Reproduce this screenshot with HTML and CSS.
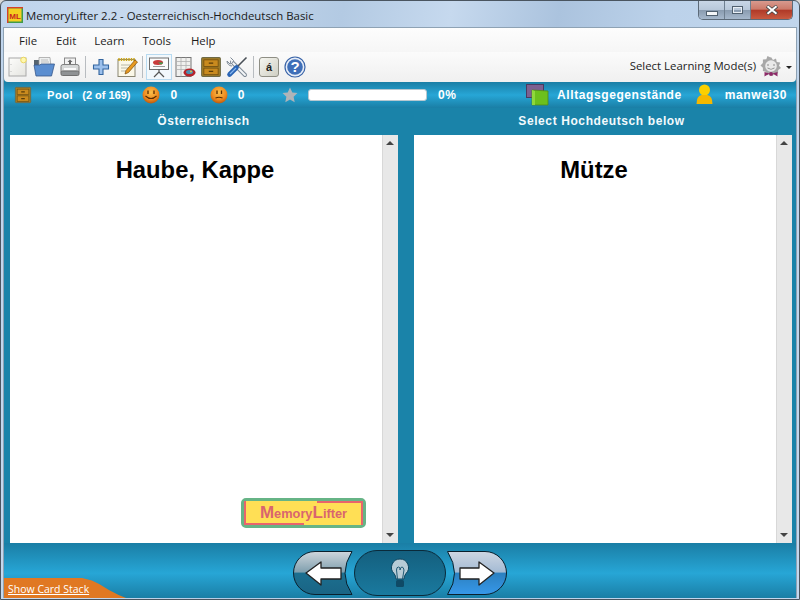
FILE: index.html
```html
<!DOCTYPE html>
<html lang="en">
<head>
    <meta charset="UTF-8">
    <title>MemoryLifter 2.2 - Oesterreichisch-Hochdeutsch Basic</title>
    <link rel="stylesheet" href="styles.css">
</head>
<body>
    <svg class="defs" width="0" height="0">
        <radialGradient id="orange" cx=".5" cy=".35" r=".7"><stop offset="0" stop-color="#fbc04a"/><stop offset=".6" stop-color="#ee8a20"/><stop offset="1" stop-color="#b04e08"/></radialGradient>
        <linearGradient id="backBtn" x1="0" y1="0" x2="0" y2="1"><stop offset="0" stop-color="#cfd6dc"/><stop offset=".48" stop-color="#7f9fae"/><stop offset=".5" stop-color="#1c6f90"/><stop offset="1" stop-color="#1a6484"/></linearGradient>
        <linearGradient id="nextBtn" x1="0" y1="0" x2="0" y2="1"><stop offset="0" stop-color="#ced6e2"/><stop offset=".48" stop-color="#a4bbd4"/><stop offset=".5" stop-color="#2b80bf"/><stop offset="1" stop-color="#3798ea"/></linearGradient>
        <linearGradient id="midBtn" x1="0" y1="0" x2="0" y2="1"><stop offset="0" stop-color="#145f7e"/><stop offset="1" stop-color="#1a7a9f"/></linearGradient>
        <linearGradient id="page" x1="0" y1="0" x2="1" y2="1"><stop offset="0" stop-color="#fdfdfb"/><stop offset="1" stop-color="#e4e4e0"/></linearGradient>
        <symbol id="drawer" viewBox="0 0 20 20">
            <rect x="1.500" y="1.500" width="17" height="17" rx="1" fill="#a87f22" stroke="#6f6a45"/>
            <rect x="3.500" y="3.500" width="13" height="6" fill="#c98a1e" stroke="#6a4a10" stroke-width=".7"/>
            <rect x="3.500" y="11" width="13" height="6" fill="#c98a1e" stroke="#6a4a10" stroke-width=".7"/>
            <path d="M8 6.500h4M8 14h4" stroke="#5a3c08" stroke-width="1.200"/>
        </symbol>
    </svg>

    <div class="window">
        <header class="titlebar">
            <svg class="app-icon" width="16" height="16" viewBox="0 0 16 16">
                <rect width="16" height="16" fill="#3f9a4a"/><path d="M0 0h16v1.500H1.500V16H0z" fill="#d8402a"/><rect x="1.500" y="1.500" width="13" height="13" fill="#f5d020"/>
                <text x="8" y="11.500" text-anchor="middle" class="app-icon-text">ML</text>
            </svg>
            <span class="title-text">MemoryLifter 2.2 - Oesterreichisch-Hochdeutsch Basic</span>
            <div class="win-buttons">
                <div class="win-btn win-min"><span></span></div>
                <div class="win-btn win-max"><span></span></div>
                <div class="win-btn win-close">
                    <svg width="16" height="10" viewBox="0 0 16 10"><path d="M3 1l10 8M13 1L3 9" stroke="#4a4a4a" stroke-width="3.600"/><path d="M3.500 1.300l9 7.400M12.500 1.300l-9 7.400" stroke="#fff" stroke-width="2"/></svg>
                </div>
            </div>
        </header>

        <div class="client">
            <nav class="menubar">
                <span class="menu-item">File</span>
                <span class="menu-item">Edit</span>
                <span class="menu-item">Learn</span>
                <span class="menu-item">Tools</span>
                <span class="menu-item">Help</span>
            </nav>

            <div class="toolbar">
                <svg class="tool" viewBox="0 0 22 22"><rect x="2" y="2" width="17" height="18" fill="url(#page)" stroke="#a8a8a8"/><circle cx="16.500" cy="4" r="2.800" fill="#fff8b0" stroke="#ecd860"/><path d="M4 8v.6M4 15v.6" stroke="#999"/></svg>
                <svg class="tool" viewBox="0 0 22 22"><path d="M1 4h6l1 2h8v4H1z" fill="#55636f"/><path d="M6 1.500h11l1 9H6z" fill="#eef0f0" stroke="#999" stroke-width=".7"/><path d="M8 4h7M8 6h8" stroke="#aaa" stroke-width=".7"/><path d="M1 9h6l1-1h13.500l-3 12H3z" fill="#5b8ed0" stroke="#38598c" stroke-width=".8"/></svg>
                <svg class="tool" viewBox="0 0 22 22"><rect x="5.500" y="2" width="11" height="9" fill="#f2f2f2" stroke="#888"/><path d="M11 3.500l-2.500 2.500h1.500v2.500h2V6h1.500z" fill="#666"/><path d="M2 10.500q0-2 2-2h14q2 0 2 2v6H2z" fill="#d6d8d8" stroke="#7f7f7f"/><rect x="2" y="15" width="18" height="4.500" rx="1.500" fill="#8f9294" stroke="#6f6f6f"/><rect x="5" y="12" width="12" height="2" fill="#fafafa"/></svg>
                <span class="tool-sep"></span>
                <svg class="tool" viewBox="0 0 22 22"><path d="M9 3.500h4v5.500h5.500v4H13v5.500H9V13H3.500V9H9z" fill="#9cc0ec" stroke="#33659f" stroke-width="1.100"/></svg>
                <svg class="tool" viewBox="0 0 22 22"><rect x="2" y="3.500" width="17" height="17" fill="#fbf8e8" stroke="#8a8672"/><path d="M3 2v3M5.500 2v3M8 2v3M10.500 2v3M13 2v3M15.500 2v3M18 2v3" stroke="#c9a418" stroke-width="1.400"/><path d="M5 9h9M5 12h7M5 15h5" stroke="#b8b8a8"/><path d="M9 18l1-3.500L19 4l2.500 2-9 10.500z" fill="#e89a20" stroke="#7a4a08" stroke-width=".7"/></svg>
                <span class="tool-sep"></span>
                <span class="tool-active">
                    <svg class="tool" viewBox="0 0 22 22"><rect x="1.500" y="2" width="19" height="11.500" fill="#fbfbfb" stroke="#6e6e6e"/><ellipse cx="10" cy="6.500" rx="5" ry="2.500" fill="#c83a3a"/><path d="M10 6.500h5a5 2.500 0 0 1-2 2z" fill="#3f9f4f"/><path d="M5 10.500h12" stroke="#9a9a9a"/><path d="M11 13.500v3M11 16l-5 5M11 16l5 5" stroke="#555" stroke-width="1.200" fill="none"/></svg>
                </span>
                <svg class="tool" viewBox="0 0 22 22"><rect x="2" y="1.500" width="15" height="19" fill="#f0f0ee" stroke="#777"/><path d="M2 5.500h15M2 9.500h15M2 13.500h15M7 1.500v19M12 1.500v19" stroke="#b0b0b0" stroke-width=".8"/><ellipse cx="15.500" cy="16.500" rx="6" ry="4" fill="#b5232a"/><ellipse cx="15.500" cy="16" rx="3.500" ry="2" fill="#4a8fb0"/><circle cx="17" cy="15.500" r="1" fill="#e2c040"/></svg>
                <svg class="tool" viewBox="0 0 20 20"><use href="#drawer"/></svg>
                <svg class="tool" viewBox="0 0 22 22">
                    <path d="M6 6l13 13" stroke="#7f8a96" stroke-width="4" stroke-linecap="round"/>
                    <path d="M6 6l13 13" stroke="#f4f6f8" stroke-width="2" stroke-linecap="round"/>
                    <path d="M4.500 1.500l3 3-1 2.500-2.500 1-3-3a5 5 0 0 0 5 5" fill="#f4f6f8" stroke="#7f8a96"/>
                    <path d="M20.500 1.500L11 11" stroke="#4a5058" stroke-width="1.600"/>
                    <path d="M10.500 11.500L3.500 18.500" stroke="#2a64b4" stroke-width="4.600" stroke-linecap="round"/>
                    <path d="M10 12L4 18" stroke="#86b6ee" stroke-width="1.200"/>
                </svg>
                <span class="tool-sep tool-sep-last"></span>
                <span class="key-btn">á</span>
                <svg class="tool" viewBox="0 0 22 22"><circle cx="11" cy="11" r="10" fill="#e8eef8" stroke="#3a64a8" stroke-width="1.200"/><circle cx="11" cy="11" r="7.800" fill="#3f6fb8"/><text x="11" y="16" text-anchor="middle" class="help-mark">?</text></svg>
                <div class="mode-select">
                    <span class="mode-label">Select Learning Mode(s)</span>
                    <svg width="24" height="24" viewBox="0 0 24 24">
                        <path d="M12 2l2 3 3-1.500 .8 3.400 3.400.6-1.200 3.300 2 2.200-2.800 2-.2 3.400-3.400-.2-1.900 2.800-2.600-2.200-3 1.500-.8-3.300-3.400-1-0-3.200-2.400-2.400 2.400-2.400 0-3.400 3.400-.4 1.200-3.100 3 1.500z" fill="#a8a8a8"/>
                        <circle cx="12" cy="11" r="5.800" fill="#e9e9e9"/>
                        <path d="M9 9.500v1M15 9.500v1" stroke="#666" stroke-width="1.400"/><path d="M8.500 13q3.500 2.500 7 0" fill="#fff" stroke="#777" stroke-width=".8"/>
                        <path d="M5.500 17l5 1.500-5 3zM18.500 17l-5 1.500 5 3z" fill="#8d2a68"/><circle cx="12" cy="19" r="2" fill="#8d2a68"/>
                    </svg>
                    <i class="caret"></i>
                </div>
            </div>

            <div class="status">
                <svg class="st-drawer" width="18" height="18"><use href="#drawer"/></svg>
                <span class="st-text st-pool">Pool</span>
                <span class="st-text st-count">(2 of 169)</span>
                <svg class="st-smile" width="18" height="18" viewBox="0 0 18 18"><circle cx="9" cy="9" r="8.500" fill="url(#orange)"/><path d="M6 4.500v3.500M12 4.500v3.500" stroke="#5a2c00" stroke-width="1.300"/><path d="M3.500 10q5.500 5 11 0" stroke="#5a2c00" stroke-width="1.100" fill="none"/></svg>
                <span class="st-num st-known">0</span>
                <svg class="st-smile st-sad" width="18" height="18" viewBox="0 0 18 18"><circle cx="9" cy="9" r="8.500" fill="url(#orange)"/><path d="M7 4.500v3.500M11.500 4.500v3.500" stroke="#5a2c00" stroke-width="1.300"/><path d="M5.500 12q3.500-1.500 7 0" stroke="#5a2c00" stroke-width="1.100" fill="none"/></svg>
                <span class="st-num st-wrong">0</span>
                <svg class="st-star" width="16" height="16" viewBox="0 0 16 16"><path d="M8 .5l2.300 5 5.200.6-3.900 3.600 1.100 5.500L8 12.400l-4.700 2.800 1.100-5.500L.5 6.100l5.200-.6z" fill="#b0b4b8"/></svg>
                <div class="progress"></div>
                <span class="st-num st-percent">0%</span>
                <svg class="st-book" width="24" height="22" viewBox="0 0 24 22"><rect x=".5" y=".5" width="17" height="13" fill="#7d6090" stroke="#4a3a60"/><path d="M6 6l16 1v14H6z" fill="#6cc01c" stroke="#4e8a18" stroke-width=".8"/><path d="M6 6l3 1v14H6z" fill="#8fd83a"/></svg>
                <span class="st-text st-deck">Alltagsgegenstände</span>
                <svg class="st-user" width="17" height="22" viewBox="0 0 17 22"><circle cx="8.500" cy="6" r="5.500" fill="#fbd000"/><path d="M.5 20q0-8 5-9h6q5 1 5 9z" fill="#f5b800"/></svg>
                <span class="st-text st-name">manwei30</span>
            </div>

            <div class="headings">
                <div class="heading heading-left">Österreichisch</div>
                <div class="heading">Select Hochdeutsch below</div>
            </div>

            <main class="panels">
                <section class="panel panel-left">
                    <div class="card"><h2 class="word">Haube, Kappe</h2></div>
                    <div class="scroll"><i class="arrow-up"></i><i class="arrow-down"></i></div>
                    <div class="logo">
                        <span class="logo-text"><b>M</b>emory<b>L</b>ifter</span>
                    </div>
                </section>
                <section class="panel">
                    <div class="card"><h2 class="word">Mütze</h2></div>
                    <div class="scroll"><i class="arrow-up"></i><i class="arrow-down"></i></div>
                </section>
            </main>

            <footer class="nav">
                <svg width="62" height="46" viewBox="0 0 62 46">
                    <path d="M60 1.500H23a21.500 21.500 0 0 0 0 43h37q-14-21 0-43z" fill="url(#backBtn)" stroke="#0a1f2c"/>
                    <path d="M14 23l15-11v6h20v11H29v6z" fill="#fff" stroke="#222" stroke-width="1.300" stroke-linejoin="round"/>
                </svg>
                <svg width="92" height="46" viewBox="0 0 92 46">
                    <rect x=".5" y=".5" width="91" height="45" rx="22.500" fill="url(#midBtn)" stroke="#0a2a3a"/>
                    <path d="M46 9a8.500 8.500 0 0 0-6 14.500q2 2.500 2 5.500h8q0-3 2-5.500a8.500 8.500 0 0 0-6-14.500z" fill="#b7ccd6" stroke="#0d4660"/>
                    <path d="M43.500 29l-1-9q0-3 2-3t1.500 3q.5-3 2-3t2 3l-1.500 9" fill="none" stroke="#225a74"/>
                    <rect x="42" y="30" width="8" height="7" rx="1.500" fill="#0f4a66"/>
                </svg>
                <svg width="62" height="46" viewBox="0 0 62 46">
                    <path d="M1.500 1.500H39a21.500 21.500 0 0 1 0 43H1.500q14-21 0-43z" fill="url(#nextBtn)" stroke="#0a1f2c"/>
                    <path d="M48 23L33 12v6H14v11h19v6z" fill="#fff" stroke="#222" stroke-width="1.300" stroke-linejoin="round"/>
                </svg>
            </footer>
            <a class="card-stack">Show Card Stack</a>
        </div>
    </div>
</body>
</html>
```

FILE: styles.css
```css
html, body {
    margin: 0;
    padding: 0;
}

body {
    width: 800px;
    height: 600px;
    overflow: hidden;
    background-color: #d8d8d8;
    font-family: "Open Sans", "Liberation Sans", sans-serif;
}

.defs {
    position: absolute;
}

.window {
    width: 800px;
    height: 600px;
    display: flex;
    flex-direction: column;
    box-sizing: border-box;
    border: 1px solid #4a5560;
    border-radius: 6px 6px 0 0;
    overflow: hidden;
    background: linear-gradient(100deg, #bfd4ec 0%, #c8daee 18%, #b3cae3 38%, #c6d9ee 50%, #abc3de 62%, #bcd2ea 74%, #c4d8ee 100%);
}

/* title bar */
.titlebar {
    height: 26px;
    flex: none;
    display: flex;
    align-items: flex-start;
    padding-left: 6px;
}

.app-icon {
    margin-top: 6px;
}

.app-icon-text {
    font: bold 8px "Liberation Sans", sans-serif;
    fill: #c8281e;
}

.title-text {
    margin: 6px 0 0 3px;
    font-size: 11.400px;
    line-height: 17px;
    color: #1a1a1a;
}

.win-buttons {
    margin-left: auto;
    margin-right: 6px;
    display: flex;
    height: 18px;
    border: 1px solid #5c6a78;
    border-top: none;
    border-radius: 0 0 5px 5px;
    overflow: hidden;
}

.win-btn {
    display: flex;
    align-items: center;
    justify-content: center;
    width: 25px;
    border-right: 1px solid #6e7f90;
    background: linear-gradient(#c8d6e6 0%, #b8c8da 48%, #8a9cb0 52%, #a6b8cc 100%);
}

.win-min span {
    width: 10px;
    height: 3px;
    margin-top: 6px;
    background-color: #f4f6f8;
    border: 1px solid #50606f;
}

.win-max span {
    width: 9px;
    height: 6px;
    border: 1px solid #50606f;
    outline: 1px solid #e8eef4;
    outline-offset: -2px;
}

.win-close {
    width: 41px;
    border-right: none;
    background: linear-gradient(#d89a8e 0%, #cc7a6a 45%, #b03a28 52%, #c85a40 100%);
}

/* client area */
.client {
    position: relative;
    flex: 1;
    display: flex;
    flex-direction: column;
    margin: 0 2px 1px;
    background-color: #1a83a9;
    border: 1px solid #8ea2b4;
    border-bottom: none;
}

.menubar {
    height: 24px;
    flex: none;
    display: flex;
    align-items: center;
    background: linear-gradient(#fdfdfd, #f6f6f6);
    font-size: 11.400px;
    color: #1c1c1c;
    padding-left: 15px;
}

.menu-item:nth-child(1) { margin-right: 19px; }
.menu-item:nth-child(2) { margin-right: 18px; }
.menu-item:nth-child(3) { margin-right: 18px; }
.menu-item:nth-child(4) { margin-right: 20px; }

.toolbar {
    height: 30px;
    flex: none;
    display: flex;
    align-items: center;
    gap: 4px;
    padding-left: 3px;
    box-sizing: border-box;
    background: linear-gradient(#fbfbfb, #f0f0f0);
    border-radius: 0 0 4px 4px;
}

.tool {
    width: 22px;
    height: 22px;
    flex: none;
    display: block;
}

.tool-sep {
    width: 1px;
    height: 22px;
    background-color: #b8bcc0;
}

.tool-sep-last {
    margin-left: 1px;
}

.tool-active {
    padding: 1px;
    margin: 0 -2px 0 -1px;
    background-color: #f2f8fc;
    border: 1px solid #b8daf0;
}

.key-btn {
    width: 20px;
    height: 20px;
    margin: 0 1px;
    box-sizing: border-box;
    border: 1px solid #8e8e84;
    border-radius: 3px;
    background: linear-gradient(135deg, #f6f6f0, #cfcfc4);
    text-align: center;
    font: bold 11px/18px "Liberation Sans", sans-serif;
    color: #222;
}

.help-mark {
    font: bold 15px "Liberation Sans", sans-serif;
    fill: #fff;
}

.mode-select {
    margin-left: auto;
    display: flex;
    align-items: center;
    font-size: 11.400px;
    color: #1c1c1c;
    padding-right: 4px;
    gap: 3px;
}

.mode-label {
    margin-bottom: 3px;
}

.caret {
    width: 0;
    height: 0;
    border: 3px solid transparent;
    border-top: 3px solid #222;
    border-bottom: none;
}

/* status strip */
.status {
    height: 26px;
    flex: none;
    display: flex;
    align-items: center;
    padding-left: 10px;
    background: linear-gradient(#1a7ea5 0%, #27a6d6 50%, #1a7ea5 100%);
}

.st-text,
.st-num {
    font: bold 12px "Liberation Sans", sans-serif;
    letter-spacing: .6px;
    color: #fff;
}

.st-pool { font-size: 11px; margin-left: 15px; }
.st-count { font-size: 11px; letter-spacing: 0; margin-left: 9px; }
.st-smile { margin-left: 11px; }
.st-known { margin-left: 11px; }
.st-sad { margin-left: 32px; }
.st-wrong { margin-left: 10px; }
.st-star { margin-left: 37px; }

.progress {
    width: 117px;
    height: 10px;
    margin-left: 10px;
    background-color: #fff;
    border: 1px solid #b8c8d0;
    border-radius: 3px;
}

.st-percent { margin-left: 11px; }
.st-book { margin-left: auto; }
.st-deck { margin-left: 7px; }
.st-user { margin-left: 14px; }
.st-name { margin-left: 12px; margin-right: 9px; }

/* column headings */
.headings {
    height: 27px;
    flex: none;
    display: flex;
    gap: 16px;
    padding: 0 6px 0 6px;
}

.heading {
    flex: 1;
    text-align: center;
    font: bold 12px/27px "Liberation Sans", sans-serif;
    letter-spacing: .6px;
    color: #f2fafd;
}

.heading-left {
    flex: none;
    width: 387px;
}

/* cards */
.panels {
    flex: 1;
    display: flex;
    gap: 16px;
    padding: 0 4px 0 6px;
    min-height: 0;
}

.panel {
    position: relative;
    flex: 1;
    display: flex;
    background-color: #fff;
}

.panel-left {
    flex: none;
    width: 388px;
}

.card {
    flex: 1;
    padding-right: 2px;
}

.word {
    margin: 21px 0 0;
    text-align: center;
    font: bold 23.800px/28px "Liberation Sans", sans-serif;
    color: #000;
}

.scroll {
    position: relative;
    width: 16px;
    background-color: #e8e8e8;
    border-left: 1px solid #d8d8d8;
    box-sizing: border-box;
}

.arrow-up,
.arrow-down {
    position: absolute;
    left: 3px;
    width: 0;
    height: 0;
    border-left: 4px solid transparent;
    border-right: 4px solid transparent;
}

.arrow-up {
    top: 6px;
    border-bottom: 4px solid #444;
}

.arrow-down {
    bottom: 6px;
    border-top: 4px solid #444;
}

.logo {
    position: absolute;
    right: 32px;
    bottom: 15px;
    width: 125px;
    height: 30px;
    box-sizing: border-box;
    border: 3px solid #66b486;
    border-radius: 5px;
    background-color: #ffdf55;
    text-align: center;
}

/* the two pink corners of the logo frame */
.logo::before,
.logo::after {
    content: "";
    position: absolute;
    border: 2px solid #e8646c;
}

.logo::before {
    left: 0;
    top: 0;
    width: 58px;
    height: 22px;
    border-top: none;
    border-right: none;
}

.logo::after {
    right: 0;
    top: 0;
    width: 44px;
    height: 22px;
    border-left: none;
    border-bottom: none;
}

.logo-text {
    font: bold 12.800px/24px "Liberation Sans", sans-serif;
    color: #d9656f;
}

.logo-text b {
    font-size: 17px;
}

/* bottom navigation */
.nav {
    height: 55px;
    flex: none;
    box-sizing: border-box;
    padding-top: 7px;
    display: flex;
    justify-content: center;
    align-items: flex-start;
    background: linear-gradient(#1a7ea5 0%, #27a6d6 55%, #1a7ea5 100%);
}

.nav svg {
    display: block;
}

.card-stack {
    position: absolute;
    left: 0;
    bottom: 0;
    width: 122px;
    height: 20px;
    box-sizing: border-box;
    padding-left: 4px;
    background-color: #e07822;
    clip-path: polygon(0 0, 64% 0, 72% 12%, 78% 30%, 86% 60%, 94% 85%, 100% 100%, 0 100%);
    font-size: 10.500px;
    line-height: 23px;
    color: #fff;
    text-decoration: underline;
}
```
